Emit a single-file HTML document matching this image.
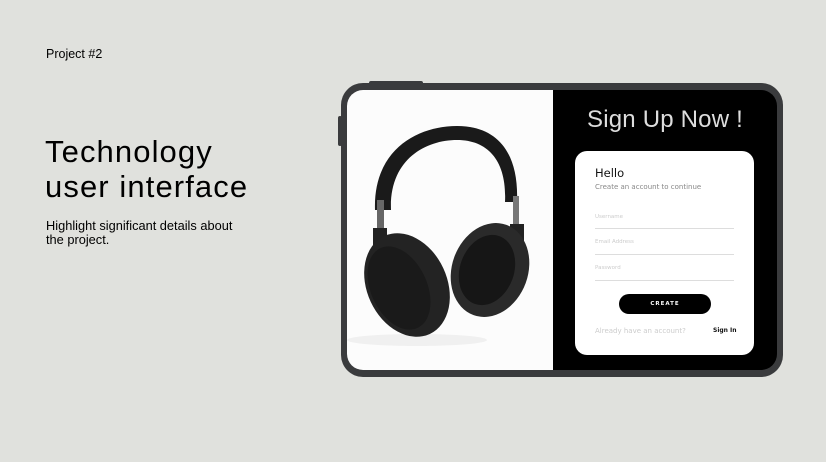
<!DOCTYPE html>
<html><head><style>
body{margin:0;width:826px;height:462px;background:#e0e1dd;font-family:"Liberation Sans",sans-serif;position:relative;overflow:hidden}
.t{position:absolute;color:#000}
</style></head><body>
<div class="t" style="left:46px;top:47px;font-size:12.5px">Project #2</div>
<div class="t" style="left:45px;top:134px;font-size:31px;line-height:35px;letter-spacing:1.1px">Technology<br>user interface</div>
<div class="t" style="left:46px;top:219px;font-size:12.8px;line-height:14px">Highlight significant details about<br>the project.</div>

<div style="position:absolute;left:369px;top:81px;width:54px;height:4px;background:#3a3b3d;border-radius:2px"></div>
<div style="position:absolute;left:338px;top:116px;width:4px;height:30px;background:#3a3b3d;border-radius:2px"></div>
<div style="position:absolute;left:341px;top:83px;width:442px;height:294px;background:#3a3b3d;border-radius:22px"></div>
<div style="position:absolute;left:347px;top:90px;width:430px;height:280px;background:#000;border-radius:16px;overflow:hidden">
  <div style="position:absolute;left:0;top:0;width:206px;height:280px;background:#fcfcfc"></div>
  <svg style="position:absolute;left:0;top:0" width="206" height="280" viewBox="0 0 206 280">
    <ellipse cx="70" cy="250" rx="70" ry="6" fill="#f0f0f0"/>
    <path d="M28 120 C26 60 70 36 110 36 C150 36 172 62 170 112 L158 112 C160 72 142 50 110 50 C78 50 42 70 44 120 Z" fill="#1a1a1a"/>
    <rect x="30" y="110" width="7" height="32" fill="#666"/>
    <rect x="166" y="106" width="6" height="34" fill="#777"/>
    <rect x="26" y="138" width="14" height="22" fill="#222"/>
    <rect x="163" y="134" width="14" height="22" fill="#222"/>
    <ellipse cx="143" cy="180" rx="38" ry="48" transform="rotate(20 143 180)" fill="#2a2a2a"/>
    <ellipse cx="140" cy="180" rx="27" ry="36" transform="rotate(20 140 180)" fill="#161616"/>
    <ellipse cx="60" cy="195" rx="40" ry="54" transform="rotate(-25 60 195)" fill="#232323"/>
    <ellipse cx="52" cy="198" rx="28" ry="44" transform="rotate(-25 52 198)" fill="#1a1a1a"/>
  </svg>
  <div style="position:absolute;left:240px;top:16px;color:#ddd;font-size:24px;letter-spacing:0.2px">Sign Up Now !</div>
  <div style="position:absolute;left:228px;top:61px;width:179px;height:204px;background:#fff;border-radius:12px;font-family:'DejaVu Sans',sans-serif">
    <div style="position:absolute;left:20px;top:15px;font-size:11.5px;color:#111">Hello</div>
    <div style="position:absolute;left:20px;top:32px;font-size:7px;color:#888">Create an account to continue</div>
    <div style="position:absolute;left:20px;top:63px;font-size:5.5px;color:#ccc">Username</div>
    <div style="position:absolute;left:20px;top:77px;width:139px;height:1px;background:#ddd"></div>
    <div style="position:absolute;left:20px;top:88px;font-size:5.5px;color:#ccc">Email Address</div>
    <div style="position:absolute;left:20px;top:103px;width:139px;height:1px;background:#ddd"></div>
    <div style="position:absolute;left:20px;top:114px;font-size:5.5px;color:#ccc">Password</div>
    <div style="position:absolute;left:20px;top:129px;width:139px;height:1px;background:#ddd"></div>
    <div style="position:absolute;left:44px;top:143px;width:92px;height:20px;background:#000;border-radius:10px;color:#fff;font-size:5.5px;font-weight:bold;letter-spacing:1px;text-align:center;line-height:20px">CREATE</div>
    <div style="position:absolute;left:20px;top:176px;font-size:7px;color:#ccc">Already have an account?</div>
    <div style="position:absolute;left:138px;top:176px;font-size:6px;color:#111;font-weight:bold">Sign In</div>
  </div>
</div>
</body></html>
